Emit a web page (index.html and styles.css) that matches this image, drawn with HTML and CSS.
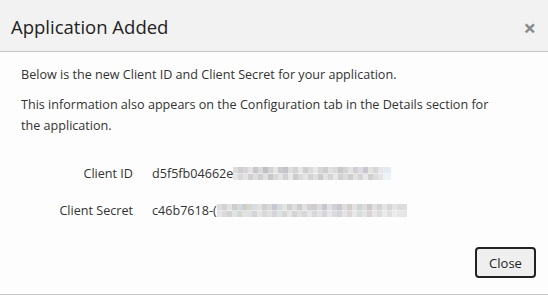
FILE: index.html
```html
<!DOCTYPE html>
<html lang="en">
<head>
    <meta charset="UTF-8">
    <meta name="viewport" content="width=device-width, initial-scale=1.0">
    <title>Application Added</title>
    <link rel="stylesheet" href="styles.css">
</head>
<body>
    <div class="dialog">
        <div class="dialog-header">
            <h1 class="dialog-title">Application Added</h1>
            <span class="dialog-close">&times;</span>
        </div>
        <div class="dialog-body">
            <p>Below is the new Client ID and Client Secret for your application.</p>
            <p>This information also appears on the Configuration tab in the Details section for the application.</p>

            <div class="creds">
                <div class="cred-label">Client ID</div>
                <div class="cred-value">d5f5fb04662e<span class="mask mask-id"></span></div>

                <div class="cred-label">Client Secret</div>
                <div class="cred-value">c46b7618-(<span class="mask mask-secret"></span></div>
            </div>
        </div>
        <div class="dialog-footer">
            <button type="button">Close</button>
        </div>
    </div>
</body>
</html>
```

FILE: styles.css
```css
body {
    margin: 0;
    background-color: #fdfdfd;
    font-family: "Open Sans", "Noto Sans", sans-serif;
    color: #333;
}

.dialog {
    width: 548px;
    height: 295px;
    box-sizing: border-box;
    border-bottom: 1px solid #c8c8c8;
    display: flex;
    flex-direction: column;
}

.dialog-header {
    height: 52px;
    box-sizing: border-box;
    background-color: #f2f2f2;
    border-bottom: 1px solid #c8c8c8;
    display: flex;
    align-items: center;
    justify-content: space-between;
    padding: 0 12px 0 11px;
}

.dialog-title {
    margin: 0;
    font-size: 18.5px;
    font-weight: normal;
    color: #222;
    margin-top: 2px;
}

.dialog-close {
    font-size: 22px;
    font-weight: bold;
    color: #8a8a8a;
    line-height: 1;
    margin-top: 2px;
}

.dialog-body {
    flex: 1;
    padding: 12px 45px 0 21px;
    font-size: 12.6px;
}

.dialog-body p {
    margin: 0 0 9px 0;
    line-height: 21px;
}

.creds {
    display: grid;
    grid-template-columns: 112px auto;
    column-gap: 19px;
    row-gap: 16px;
    margin-top: 27px;
    line-height: 21px;
}

.cred-label {
    text-align: right;
}

.cred-value {
    display: flex;
    align-items: center;
    white-space: nowrap;
}

.mask {
    display: inline-block;
    flex-shrink: 0;
    height: 13px;
    background-size: 100% 50%;
    background-repeat: no-repeat;
}

.mask-id {
    width: 158px;
    background-image:
        linear-gradient(90deg, #dcdcdc 0 5px, #cfcfcf 5px 10px, #d8d4d8 10px 15px, #e2e2e2 15px 20px, #c9c6cc 20px 25px, #d9d9d9 25px 30px, #bfbfc6 30px 35px, #d3d3d3 35px 40px, #e4e4e4 40px 45px, #cbcbcb 45px 50px, #c4c4cc 50px 55px, #dedede 55px 60px, #d2d2d2 60px 65px, #e6e6e6 65px 70px, #cfcfd3 70px 75px, #dbdbdb 75px 80px, #e8e8e8 80px 85px, #d6d6d6 85px 90px, #cdcdcd 90px 95px, #e0e0e0 95px 100px, #dadada 100px 105px, #cacaca 105px 110px, #d4d4d4 110px 115px, #e3e3e3 115px 120px, #d0cfd6 120px 125px, #dedcdf 125px 130px, #cbc6cf 130px 135px, #e2e2e2 135px 140px, #d7d7d7 140px 145px, #e6e6e6 145px 150px, #e3ecf3 150px 158px),
        linear-gradient(90deg, #e6e6e6 0 5px, #d8d8d8 5px 10px, #e4e4e4 10px 15px, #d0d0d0 15px 20px, #dedede 20px 25px, #cfcfd4 25px 30px, #e1e1e1 30px 35px, #c8c8c8 35px 40px, #d9d9d9 40px 45px, #e4e4e4 45px 50px, #d2d2d2 50px 55px, #e8e8e8 55px 60px, #cccccc 60px 65px, #dadada 65px 70px, #e5e5e5 70px 75px, #d3d3d3 75px 80px, #dfdfdf 80px 85px, #cbcbcb 85px 90px, #e2e2e2 90px 95px, #d5d5d5 95px 100px, #e7e7e7 100px 105px, #d1d1d1 105px 110px, #dcdcdc 110px 115px, #cecece 115px 120px, #e2e2e2 120px 125px, #d5d5d5 125px 130px, #e9e9e9 130px 135px, #d0d0d0 135px 140px, #dddddd 140px 145px, #e4e4e4 145px 150px, #eef3f6 150px 158px);
    background-position: 0 0, 0 100%;
}

.mask-secret {
    width: 190px;
    background-image:
        linear-gradient(90deg, #dcdcdc 0 5px, #d2d2d2 5px 10px, #e2e2e2 10px 15px, #cbd0cd 15px 20px, #d8d8d8 20px 25px, #c6d0d4 25px 30px, #dbd5cc 30px 35px, #d6dde3 35px 40px, #e0e0e0 40px 45px, #cfcfcf 45px 50px, #d9d9d9 50px 55px, #c8c8d2 55px 60px, #d3dcdb 60px 65px, #e3e3e3 65px 70px, #d0d0d0 70px 75px, #dedede 75px 80px, #c9cdd0 80px 85px, #e1e1e1 85px 90px, #d3cfcf 90px 95px, #cfcbd3 95px 100px, #dbdbdb 100px 105px, #c8c6d1 105px 110px, #e0e0e0 110px 115px, #d0d0d6 115px 120px, #c9c7ce 120px 125px, #dedede 125px 130px, #d2cccc 130px 135px, #e2e2e2 135px 140px, #cfd4d6 140px 145px, #dddddd 145px 150px, #cec8c8 150px 155px, #e0e0e0 155px 160px, #d3d3d3 160px 165px, #e4e4e4 165px 170px, #d6d6d6 170px 175px, #e5e5e5 175px 180px, #dcdcdc 180px 190px),
        linear-gradient(90deg, #e4e4e4 0 5px, #dadada 5px 10px, #d0d4d2 10px 15px, #e2e2e2 15px 20px, #cfd9db 20px 25px, #e6e1d8 25px 30px, #dbe1e6 30px 35px, #d5d5d5 35px 40px, #e4e4e4 40px 45px, #d8d8d8 45px 50px, #e1e1e1 50px 55px, #d4d4dc 55px 60px, #dde3e3 60px 65px, #d6d6d6 65px 70px, #e5e5e5 70px 75px, #d4d4d4 75px 80px, #e0e0e0 80px 85px, #d7d7d7 85px 90px, #e5e5e5 90px 95px, #d9d6dc 95px 100px, #e2e2e2 100px 105px, #d6d4dc 105px 110px, #e6e6e6 110px 115px, #dadade 115px 120px, #d6d4da 120px 125px, #e4e4e4 125px 130px, #dbd7d7 130px 135px, #e8e8e8 135px 140px, #d8dcdd 140px 145px, #e4e4e4 145px 150px, #d9d4d4 150px 155px, #e6e6e6 155px 160px, #dcdcdc 160px 165px, #ebebeb 165px 170px, #e0e0e0 170px 175px, #ececec 175px 180px, #e6e6e6 180px 190px);
    background-position: 0 0, 0 100%;
}

.dialog-footer {
    display: flex;
    justify-content: flex-end;
    padding: 0 12px 16px 0;
}

button {
    font-family: "Open Sans", "Noto Sans", sans-serif;
    font-size: 13px;
    color: #222;
    background-color: #efefef;
    border: 2px solid #222;
    border-radius: 4px;
    width: 61px;
    height: 31px;
    padding: 0;
    cursor: pointer;
}

button:hover {
    opacity: 0.8;
}
```
